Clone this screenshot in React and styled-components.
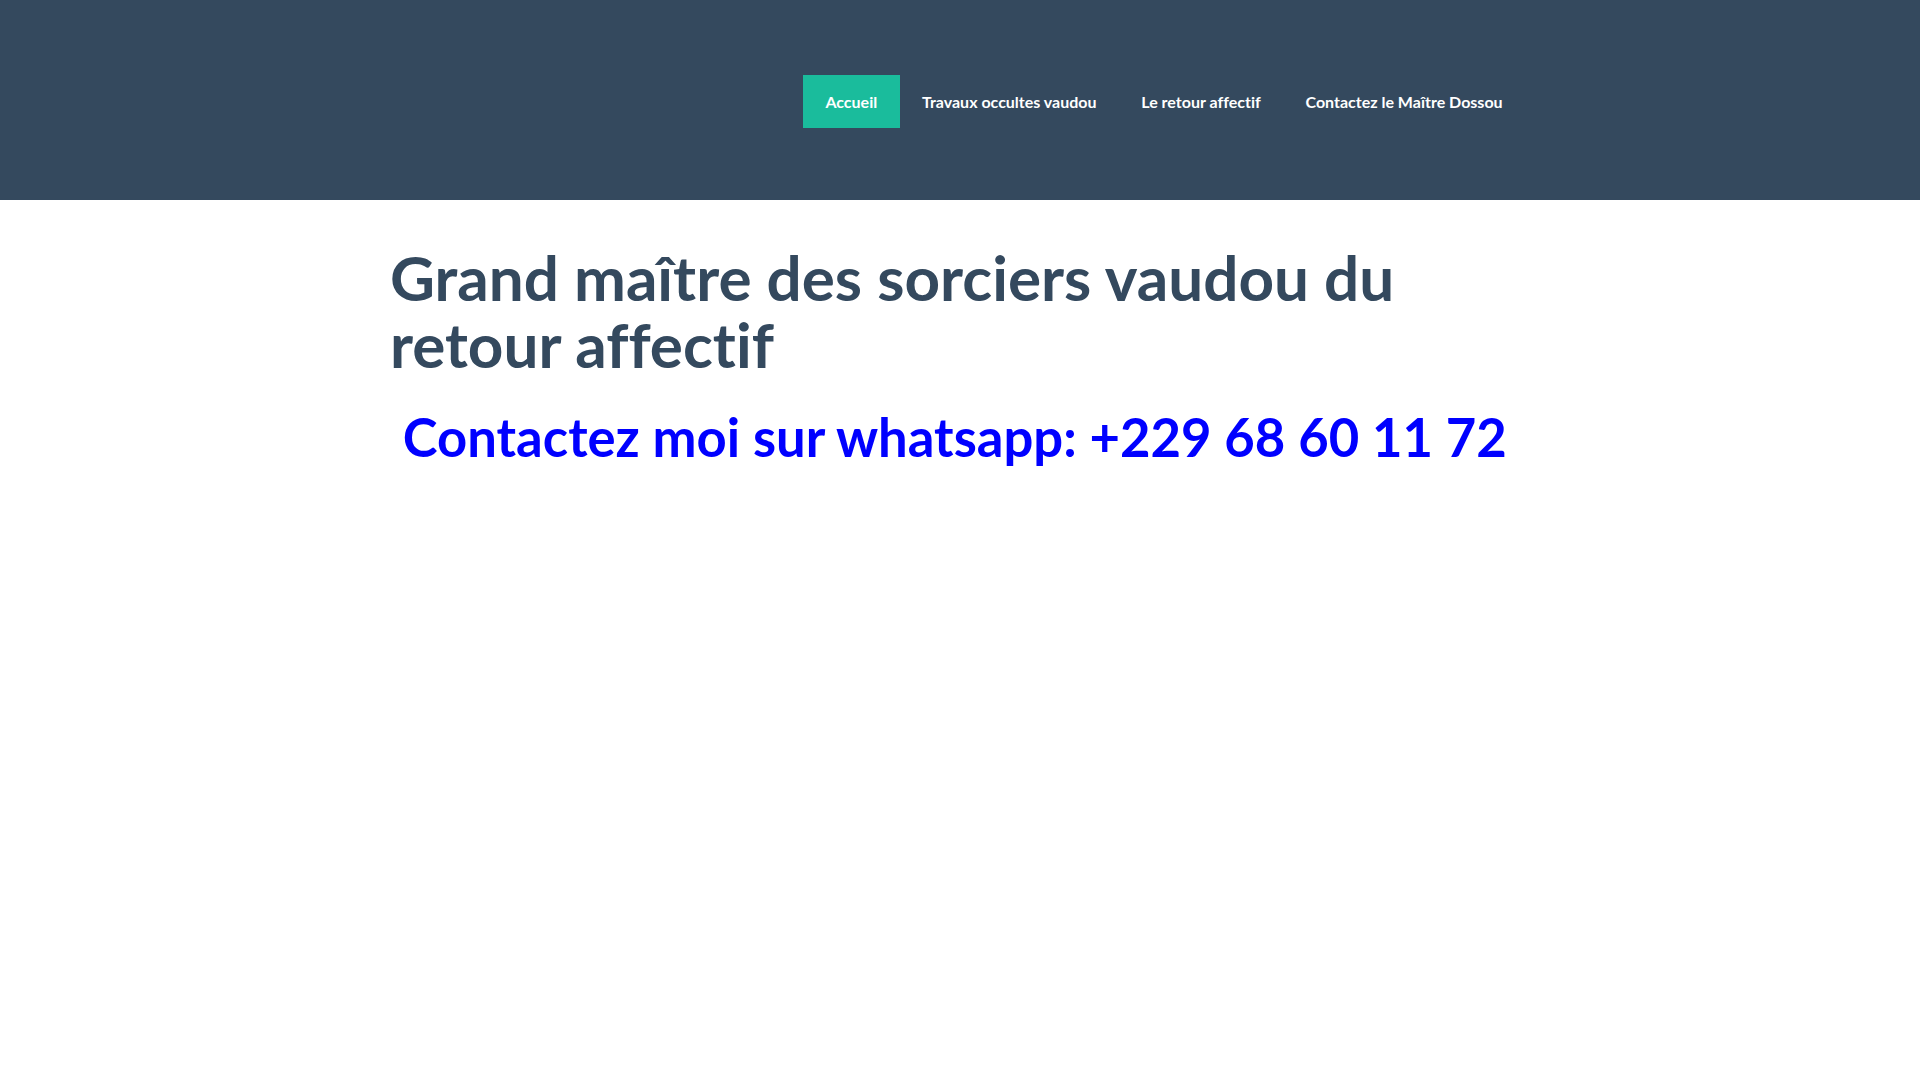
import React from "react";
import styled, { createGlobalStyle } from "styled-components";

const GlobalStyle = createGlobalStyle`
  html, body {
    margin: 0;
    padding: 0;
    background: #fff;
    font-family: Lato, "Open Sans", sans-serif;
    font-variant-ligatures: none;
  }
`;

const Header = styled.header`
  height: 200px;
  background-color: #34495e;
  box-sizing: border-box;
  padding-top: 75px;
`;

const Container = styled.div`
  width: 1170px;
  margin: 0 auto;
  padding: 0 15px;
  box-sizing: border-box;
`;

const NavBar = styled.nav`
  display: flex;
  justify-content: flex-end;
  padding-right: 5px;
`;

const NavItem = styled.a`
  display: flex;
  align-items: center;
  height: 53px;
  padding: 0 22.4px;
  color: #fff;
  font-size: 16px;
  font-weight: 700;
  text-decoration: none;
  background-color: ${(p) => (p.$active ? "#1abc9c" : "transparent")};
  cursor: pointer;
`;

const Main = styled.main`
  padding-top: 44px;
`;

const Title = styled.h1`
  margin: 0;
  color: #34495e;
  font-size: 62px;
  font-weight: 700;
  line-height: 67px;
`;

const Contact = styled.p`
  margin: 30px 0 0;
  color: #0000ff;
  font-size: 52.6px;
  font-weight: 700;
  line-height: 58px;
  white-space: nowrap;
`;

const links = [
  "Accueil",
  "Travaux occultes vaudou",
  "Le retour affectif",
  "Contactez le Maître Dossou",
];

export default function App() {
  return (
    <>
      <GlobalStyle />
      <Header>
        <Container>
          <NavBar>
            {links.map((label, i) => (
              <NavItem key={label} $active={i === 0}>
                {label}
              </NavItem>
            ))}
          </NavBar>
        </Container>
      </Header>
      <Main>
        <Container>
          <Title>Grand maître des sorciers vaudou du retour affectif</Title>
          <Contact>&nbsp;Contactez moi sur whatsapp: +229 68 60 11 72</Contact>
        </Container>
      </Main>
    </>
  );
}
